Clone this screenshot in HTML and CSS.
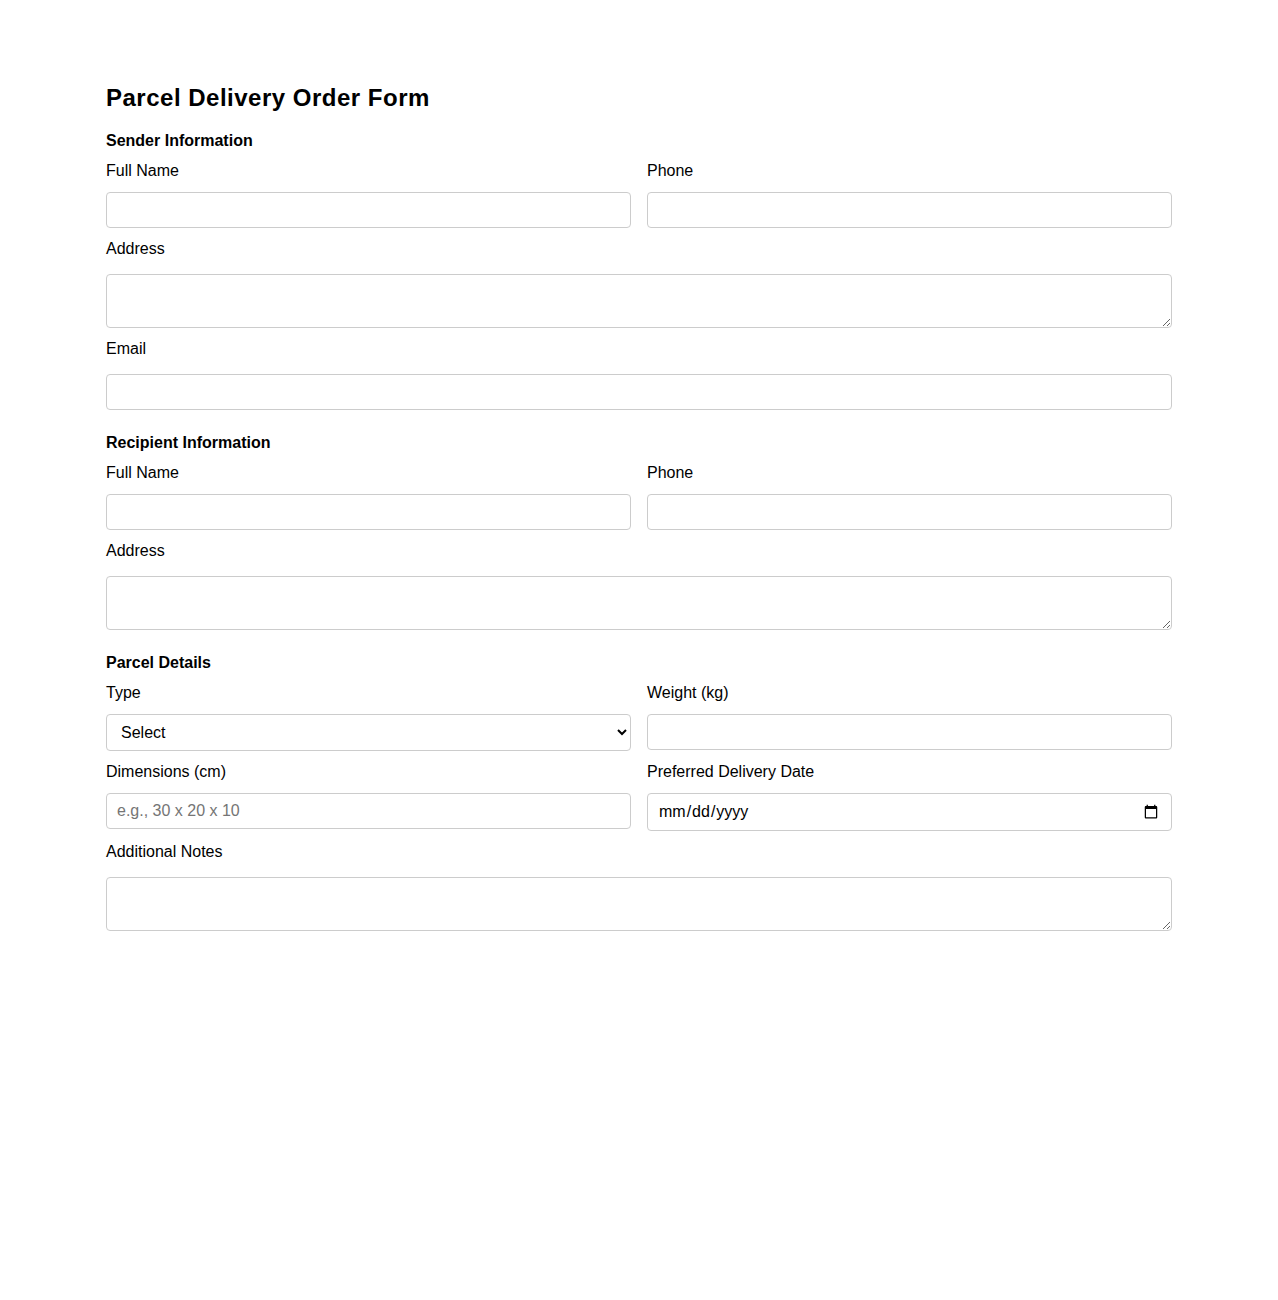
FILE: index.html
```
<!DOCTYPE html>
<html lang="en">
<head>
    <meta charset="UTF-8">
    <meta name="viewport" content="width=device-width, initial-scale=1.0">
    <title>Parcel Delivery Order Form</title>
    <link rel="stylesheet" href="styles.css">
</head>
<body>

    <form class="order-form">
        <h1>Parcel Delivery Order Form</h1>

        <h2 class="section-title">Sender Information</h2>
        <div class="row">
            <div class="field">
                <label for="senderName">Full Name</label>
                <input type="text" id="senderName">
            </div>
            <div class="field">
                <label for="senderPhone">Phone</label>
                <input type="tel" id="senderPhone">
            </div>
        </div>
        <div class="field wide">
            <label for="senderAddress">Address</label>
            <textarea id="senderAddress" rows="2"></textarea>
        </div>
        <div class="field wide">
            <label for="senderEmail">Email</label>
            <input type="email" id="senderEmail">
        </div>

        <h2 class="section-title">Recipient Information</h2>
        <div class="row">
            <div class="field">
                <label for="recipientName">Full Name</label>
                <input type="text" id="recipientName">
            </div>
            <div class="field">
                <label for="recipientPhone">Phone</label>
                <input type="tel" id="recipientPhone">
            </div>
        </div>
        <div class="field wide">
            <label for="recipientAddress">Address</label>
            <textarea id="recipientAddress" rows="2"></textarea>
        </div>

        <h2 class="section-title">Parcel Details</h2>
        <div class="row">
            <div class="field">
                <label for="parcelType">Type</label>
                <select id="parcelType">
                    <option>Select</option>
                    <option>Document</option>
                    <option>Package</option>
                    <option>Fragile</option>
                </select>
            </div>
            <div class="field">
                <label for="parcelWeight">Weight (kg)</label>
                <input type="number" id="parcelWeight">
            </div>
        </div>
        <div class="row">
            <div class="field">
                <label for="parcelSize">Dimensions (cm)</label>
                <input type="text" id="parcelSize" placeholder="e.g., 30 x 20 x 10">
            </div>
            <div class="field">
                <label for="deliveryDate">Preferred Delivery Date</label>
                <input type="date" id="deliveryDate">
            </div>
        </div>
        <div class="field wide">
            <label for="notes">Additional Notes</label>
            <textarea id="notes" rows="2"></textarea>
        </div>
    </form>

</body>
</html>
```

FILE: styles.css
```
body {
    font-family: "Liberation Sans", Arial, sans-serif;
    color: #000;
    background-color: #fff;
    margin: 0;
}
.order-form {
    max-width: 1066px;
    margin: 0 auto;
    padding-top: 84px;
}
h1 {
    font-size: 24px;
    letter-spacing: 0.5px;
    margin: 0 0 20px;
}
.section-title {
    font-size: 16px;
    margin: 0 0 12px;
}
.row + .section-title,
.field + .section-title {
    margin-top: 24px;
}
.row {
    display: grid;
    grid-template-columns: 1fr 1fr;
    column-gap: 16px;
}
.field {
    margin-bottom: 12px;
}
label {
    display: block;
    font-size: 16px;
    margin-bottom: 12px;
}
.wide label {
    margin-bottom: 16px;
}
input, select, textarea {
    display: block;
    width: 100%;
    box-sizing: border-box;
    padding: 8px 10px;
    font-family: inherit;
    font-size: 16px;
    color: #000;
    border: 1px solid #ccc;
    border-radius: 4px;
    background-color: #fff;
    margin: 0;
}
textarea {
    resize: vertical;
}
```
